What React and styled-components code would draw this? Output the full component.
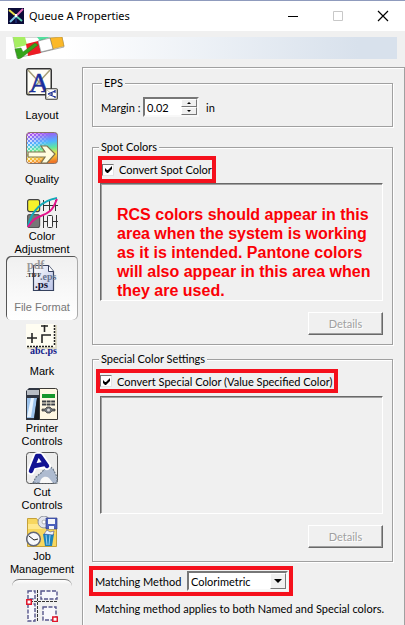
import { useState } from 'react';
import styled, { createGlobalStyle } from 'styled-components';

const tools = [
  { label: 'Layout', icon: LayoutIcon },
  { label: 'Quality', icon: QualityIcon },
  { label: 'Color\nAdjustment', icon: ColorIcon },
  { label: 'File Format', icon: FileIcon },
  { label: 'Mark', icon: MarkIcon },
  { label: 'Printer\nControls', icon: PrinterIcon },
  { label: 'Cut\nControls', icon: CutIcon },
  { label: 'Job\nManagement', icon: JobIcon },
];

function App() {
  const [active, setActive] = useState('File Format');
  const [margin, setMargin] = useState('0.02');

  const step = (amount) => {
    setMargin(Math.max(0, Number(margin) + amount).toFixed(2));
  }

  return (
    <>
      <GlobalStyle />
      <Window>
        <TitleBar>
          <AppIcon />
          <Title>Queue A Properties</Title>
          <WindowButton aria-label="Minimize">
            <svg width="12" height="12"><path d="M1 6.5h10" stroke="#000" /></svg>
          </WindowButton>
          <WindowButton aria-label="Maximize" disabled>
            <svg width="12" height="12"><path d="M1.5 1.5h9v9h-9z" fill="none" stroke="#c8c8c8" /></svg>
          </WindowButton>
          <WindowButton aria-label="Close">
            <svg width="12" height="12"><path d="M1 1l10 10M11 1L1 11" stroke="#000" strokeWidth="1.2" /></svg>
          </WindowButton>
        </TitleBar>
        <Banner><BannerArt /></Banner>
        <Body>
          <Sidebar>
            {tools.map(({ label, icon: Icon }) => (
              <Tool key={label} $active={label === active} onClick={() => setActive(label)}>
                <Icon />
                <ToolLabel>{label}</ToolLabel>
              </Tool>
            ))}
            <ScrollEdge />
            <Tool $short aria-label="Tiling"><TilingIcon /></Tool>
          </Sidebar>
          <Panel>
            <Group $bottom={8}>
              <Legend $indent={3}>EPS</Legend>
              <MarginRow>
                <label htmlFor="margin">Margin :</label>
                <Spinner>
                  <SpinnerInput id="margin" value={margin} onChange={(e) => setMargin(e.target.value)} />
                  <SpinnerButtons>
                    <SpinnerButton aria-label="Increase" onClick={() => step(0.01)}>
                      <svg width="4" height="3"><path d="M2 0l2 2H0z" /></svg>
                    </SpinnerButton>
                    <SpinnerButton aria-label="Decrease" onClick={() => step(-0.01)}>
                      <svg width="4" height="3"><path d="M0 0h4L2 2z" /></svg>
                    </SpinnerButton>
                  </SpinnerButtons>
                </Spinner>
                <span>in</span>
              </MarginRow>
            </Group>

            <Group $top={13} $bottom={9}>
              <Legend>Spot Colors</Legend>
              <CheckRow $top={2} $height={27} $outdent={2}>
                <Check />
                <CheckText>Convert Spot Color</CheckText>
              </CheckRow>
              <ColorList>
                <Note>
                  RCS colors should appear in this area when the system is working
                  as it is intended. Pantone colors will also appear in this area when
                  they are used.
                </Note>
              </ColorList>
              <DetailsButton disabled>Details</DetailsButton>
            </Group>

            <Group $top={7} $bottom={13}>
              <Legend>Special Color Settings</Legend>
              <CheckRow $top={3} $height={24} $outdent={4} $right={2} $bottom={3}>
                <Check />
                <CheckText>Convert Special Color (Value Specified Color)</CheckText>
              </CheckRow>
              <ColorList />
              <DetailsButton disabled>Details</DetailsButton>
            </Group>

            <MethodRow>
              <label htmlFor="method">Matching Method</label>
              <SelectBox>
                <Select id="method" defaultValue="Colorimetric">
                  <option>Colorimetric</option>
                  <option>Perceptual</option>
                  <option>Saturation</option>
                </Select>
                <SelectArrow>
                  <svg width="8" height="4"><path d="M0 0h8L4 4z" /></svg>
                </SelectArrow>
              </SelectBox>
            </MethodRow>
            <Hint>Matching method applies to both Named and Special colors.</Hint>
          </Panel>
        </Body>
      </Window>
    </>
  )
}

function Check() {
  return (
    <CheckBox>
      <CheckInput type="checkbox" defaultChecked />
      <svg width="7" height="7"><path d="M0 2v3l2 2h1l4-4V0L3 4 2 4z" /></svg>
    </CheckBox>
  )
}

function AppIcon() {
  return (
    <svg width="16" height="16" viewBox="0 0 16 16">
      <path d="M0 0h16v16H0z" fill="#0b0b38" />
      <path d="M1 2l6 5" stroke="#e8e04a" strokeWidth="2" />
      <path d="M15 1L8 8" stroke="#e070b8" strokeWidth="2" />
      <path d="M8 8l-6 6" stroke="#7fc8e8" strokeWidth="2" />
      <path d="M8 8l6 5" stroke="#5fd0b0" strokeWidth="2" />
      <path d="M7 6h2v3H7z" fill="#fff" />
      <path d="M8 10v5" stroke="#27459a" />
    </svg>
  )
}

function BannerArt() {
  return (
    <svg width="64" height="22" viewBox="0 0 64 22">
      <path d="M7 0l4 21 47-11-2-10z" fill="#fff" stroke="#777" strokeWidth=".6" />
      <path d="M7 0h12l2 8-12 3z" fill="#a6ee62" />
      <path d="M31 0h13l-10 4z" fill="#52df9d" />
      <path d="M20 7l12-3 3 12-13 3z" fill="#ed1c24" />
      <path d="M44 1l12-1 2 9-12 3z" fill="#fbb829" stroke="#b78a20" strokeWidth=".5" />
      <path d="M32 4l12-3 3 11-12 3z" fill="#fff" stroke="#555" strokeWidth=".5" />
      <path d="M9 12l6-1 2 4 12-9 3 2-17 13-3 1z" fill="#35a51b" stroke="#268112" strokeWidth=".5" />
    </svg>
  )
}

function LayoutIcon() {
  return (
    <svg width="32" height="32" viewBox="0 0 32 32">
      <rect x=".75" y=".75" width="24.5" height="26" rx="1.5" fill="#fffef6" stroke="#333" strokeWidth="1.5" />
      <path d="M2 2l22 24M24 2L2 26" stroke="#a8a078" strokeWidth="1.5" />
      <text x="3" y="24" fontFamily="Liberation Serif, serif" fontSize="28" fill="#1c2f9c" stroke="#1c2f9c" strokeWidth=".5">A</text>
      <rect x="19.75" y="20.75" width="11.5" height="10.5" rx="1" fill="#fff" stroke="#333" strokeWidth="1.2" />
      <path d="M20 31l11-10M20 21l11 10" stroke="#bdb693" strokeWidth=".8" />
      <path d="M22 26l7-3M22 26l7 3M26 24v4M29 22v3M29 28v2" fill="none" stroke="#1c2f9c" strokeWidth="1.2" />
    </svg>
  )
}

function QualityIcon() {
  return (
    <svg width="32" height="32" viewBox="0 0 32 32">
      <defs>
        <linearGradient id="rainbow" x1=".3" y1="0" x2=".45" y2="1">
          <stop offset="0" stopColor="#b545f0" />
          <stop offset=".35" stopColor="#4fb4ff" />
          <stop offset=".55" stopColor="#60e8a0" />
          <stop offset=".75" stopColor="#f8e040" />
          <stop offset="1" stopColor="#f07828" />
        </linearGradient>
        <linearGradient id="fade">
          <stop offset="0" stopColor="#fff" stopOpacity=".8" />
          <stop offset=".75" stopColor="#fff" stopOpacity="0" />
        </linearGradient>
        <pattern id="dots" width="4" height="4" patternUnits="userSpaceOnUse">
          <path d="M0 0h2v2H0zM2 2h2v2H2z" fill="#fff" />
        </pattern>
        <mask id="dotMask"><path d="M0 0h32v32H0z" fill="url(#dots)" /></mask>
      </defs>
      <rect x=".5" y=".5" width="31" height="31" rx="3" fill="url(#rainbow)" stroke="#8a7468" />
      <rect x="1" y="1" width="30" height="30" rx="2" fill="url(#fade)" mask="url(#dotMask)" />
      <path d="M2 20h17l-4-6h6l8 8-8 9h-6l4-6H2z" fill="#fffde0" stroke="#7e7350" strokeWidth="1.2" />
    </svg>
  )
}

function ColorIcon() {
  return (
    <svg width="32" height="32" viewBox="0 0 32 32">
      <rect x="1.6" y="3.6" width="12" height="12" rx="2" fill="#f6f22c" stroke="#444" strokeWidth="1.2" />
      <rect x="1.6" y="18.6" width="12" height="13" rx="2" fill="#777" stroke="#555" strokeWidth="1.2" />
      <path d="M17.5 4v11M17 9.5h15M23.5 4v11M29.5 4v11M17.5 19v13M17 25.5h4M27 25.5h5M30.5 19v13" stroke="#333" fill="none" />
      <rect x="21.5" y="19.5" width="5" height="12" rx="1" fill="#f8f8f8" stroke="#333" />
      <path d="M2 30C6 14 15 5 31 2" fill="none" stroke="#12a9b8" strokeWidth="2" />
      <path d="M2 31C10 18 16 22 24 15C28 12 29 7 31 3" fill="none" stroke="#e4148c" strokeWidth="2" />
    </svg>
  )
}

function FileIcon() {
  return (
    <svg width="32" height="32" viewBox="0 0 32 32">
      <defs>
        <linearGradient id="sheet" x1="0" y1="0" x2="1" y2="1">
          <stop offset="0" stopColor="#fff" />
          <stop offset="1" stopColor="#b9c2e6" />
        </linearGradient>
      </defs>
      <path d="M7.5 5.5h15l5 6v19h-20z" fill="url(#sheet)" stroke="#35415e" strokeWidth="1.2" />
      <path d="M22.5 5.5v6h5" fill="#fff" stroke="#35415e" />
      <g fontFamily="Liberation Serif, serif" fontWeight="bold">
        <text x="1" y="9" fontSize="12" fill="#999">pdf</text>
        <text x="0" y="17" fontSize="6" fill="#222">.TIFF</text>
        <text x="14" y="20" fontSize="10" fill="#64718e">.eps</text>
        <text x="9" y="28" fontSize="11" fill="#101030">.ps</text>
      </g>
    </svg>
  )
}

function MarkIcon() {
  return (
    <svg width="32" height="32" viewBox="0 0 32 32">
      <path d="M1 1h30v24H1z" fill="#e0dcc8" />
      <path d="M0 0h29v23H0z" fill="#fffdf2" />
      <path d="M1 14h10M6 9v10M15 2h7M18.5 1v7M16 19v-8h9" stroke="#252525" strokeWidth="1.6" fill="none" />
      <path d="M1 22.5h26M28.5 1v21" stroke="#222" strokeWidth="1.5" strokeDasharray="2 1" />
      <text x="4" y="30" fontFamily="Liberation Serif, serif" fontWeight="bold" fontSize="10" fill="#14208a">abc.ps</text>
    </svg>
  )
}

function PrinterIcon() {
  return (
    <svg width="32" height="32" viewBox="0 0 32 32">
      <path d="M0 3l3-3h11v32H0z" fill="#303642" />
      <path d="M1 2h12v5H1z" fill="#b8bdc4" />
      <path d="M1 10h10l-3 20H1z" fill="#9cc3ec" />
      <path d="M5 10h3L5 29H1z" fill="#e8f4ff" />
      <path d="M11 10h3v22H8z" fill="#14191f" />
      <path d="M13.5.5h16q2 0 2 2v29h-18z" fill="#fff8e3" stroke="#3a3834" />
      <path d="M16 6h13v4H16z" fill="#16972b" />
      <path d="M16 13.5h13M16 16.500h13" stroke="#3d4148" strokeWidth="2" strokeDasharray="4 .6" />
      <path d="M16 21h3l2-2h3l2 2h3v2h-3l-2 2h-3l-2-2h-3z" fill="#6d7277" stroke="#333" strokeWidth=".7" />
      <circle cx="22.5" cy="22" r="1.5" fill="#ddd" />
    </svg>
  )
}

function CutIcon() {
  return (
    <svg width="32" height="32" viewBox="0 0 32 32">
      <rect x=".5" y=".5" width="31" height="31" rx="3" fill="#ececec" stroke="#555" />
      <path d="M7 31l3-6 5-4 7-8 5 4 4 8v6z" fill="#aebbd0" stroke="#6b7888" strokeWidth="1.2" strokeDasharray="2 1" />
      <path d="M14 31c0-5 5-8 9-5l4 5z" fill="#f8f8f8" />
      <path d="M5 19L11 4h3l7 10M8 13h9" fill="none" stroke="#fff" strokeWidth="8" strokeLinejoin="round" strokeLinecap="round" />
      <path d="M5 19L11 4h3l7 10M8 14l10-2" fill="none" stroke="#121394" strokeWidth="4.5" strokeLinejoin="round" strokeLinecap="round" />
    </svg>
  )
}

function JobIcon() {
  return (
    <svg width="32" height="32" viewBox="0 0 32 32">
      <path d="M1.5 2.5h9l3 4h17v24h-29z" fill="#f7d75e" stroke="#c5a13a" />
      <path d="M2 8h28v5H2z" fill="#ffe98c" />
      <circle cx="18" cy="6" r="6" fill="#e3e5ee" stroke="#8b8f99" />
      <circle cx="18" cy="6" r="2" fill="#fff" stroke="#999" strokeWidth=".7" />
      <path d="M20 2h11v11H20z" fill="#4b5fbd" stroke="#33408a" strokeWidth=".7" />
      <path d="M22 3h7v5h-7zM23 10h5v3h-5z" fill="#f4f5fa" />
      <path d="M17 18h11l-2 12h-7z" fill="#1d83bd" />
      <path d="M18 18l3-4 3 2 4-1-1 4z" fill="#eef8ff" stroke="#338" strokeWidth=".5" />
      <path d="M20 19l1 10M24 19l-1 10" stroke="#9fd5f3" />
      <circle cx="7.5" cy="23" r="6.8" fill="#f7f8fb" stroke="#626779" strokeWidth="1.5" />
      <path d="M3 20l5 4 4-1" fill="none" stroke="#252525" />
    </svg>
  )
}

function TilingIcon() {
  return (
    <svg width="32" height="32" viewBox="0 0 32 32">
      <g fill="#f8f8fc" stroke="#56568c" strokeWidth="1.4" strokeDasharray="4 1.5">
        <path d="M2 1h7v8H2zM15 1h16v8H15zM2 14h7v17H2zM17 17h13v13H17z" />
      </g>
      <path d="M11.5 0v32M0 11.5h32" stroke="#333" strokeDasharray="3 1" />
      <path d="M.8 9.8h4.5v4.5H.8zM26.8 27h4.500v4.500h-4.500z" fill="#fff" stroke="#e0152a" strokeWidth="1.5" />
    </svg>
  )
}

const GlobalStyle = createGlobalStyle`
  * {
    box-sizing: border-box;
  }
  body {
    margin: 0;
    background: #f0f0f0;
    font-family: Lato, "Liberation Sans", Arial, sans-serif;
    font-size: 11px;
    line-height: 13px;
    color: #000;
  }
  button, input, select {
    font: inherit;
    color: inherit;
    margin: 0;
    padding: 0;
    border: 0;
    border-radius: 0;
    background: none;
  }
  svg {
    display: block;
    flex: none;
  }
`;

const Window = styled.main`
  display: flex;
  flex-direction: column;
  min-height: 100vh;
`;

const TitleBar = styled.header`
  display: flex;
  align-items: center;
  height: 31px;
  padding-left: 8px;
  border-top: 1px solid #8f9bbd;
  background: #fff;
`;

const Title = styled.h1`
  flex: 1;
  margin: 0 0 0 5px;
  font: 400 11px/16px "Noto Sans", "Open Sans", sans-serif;
  white-space: nowrap;
`;

const WindowButton = styled.button`
  display: flex;
  align-items: center;
  justify-content: center;
  width: 45px;
  height: 30px;
`;

const Banner = styled.div`
  height: 22px;
  margin: 6px 8px 5px 6px;
  overflow: hidden;
  background: linear-gradient(90deg, #fff 15%, #d8e1ec 90%);
`;

const Body = styled.div`
  display: flex;
  flex: 1;
`;

const Sidebar = styled.nav`
  display: flex;
  flex-direction: column;
  align-items: center;
  flex: none;
  width: 82px;
  padding-left: 2px;
`;

const Tool = styled.button`
  display: flex;
  flex-direction: column;
  align-items: center;
  width: 72px;
  height: ${(props) => (props.$short ? '36px' : '64px')};
  padding-top: 4px;
  border-radius: 5px;
  ${(props) => props.$active && `
    background: linear-gradient(#f0f0f0, #fff);
    box-shadow: inset 1px 1px 0 #555, inset -1px 0 0 #aaa;
    color: #777;
  `}
`;

const ToolLabel = styled.span`
  display: flex;
  align-items: center;
  justify-content: center;
  flex: none;
  height: 30px;
  font: 11px/13px "Liberation Sans", Arial, sans-serif;
  white-space: pre-line;
`;

const ScrollEdge = styled.div`
  width: 60px;
  height: 7px;
  margin-top: 3px;
  border-top: 1px solid #777;
  border-radius: 8px 8px 0 0;
  background: linear-gradient(#fff, #f0f0f0 4px);
`;

const Panel = styled.section`
  flex: 1;
  min-width: 0;
  margin-top: 3px;
  padding: 8px 11px 8px 9px;
  border: 1px solid #a0a0a0;
  border-bottom: 0;
  box-shadow: inset 1px 1px 0 #fff;
`;

const Group = styled.fieldset`
  min-width: 0;
  margin: ${(props) => props.$top || 0}px 0 0;
  padding: 0 9px ${(props) => props.$bottom}px 7px;
  border: 1px solid #a0a0a0;
  box-shadow: 1px 1px 0 #fff, inset 1px 1px 0 #fff;
`;

const Legend = styled.legend`
  height: 14px;
  margin-left: ${(props) => (props.$indent || 0) - 1}px;
  padding: 0 2px;
  background: #f0f0f0;
`;

const MarginRow = styled.div`
  display: flex;
  align-items: center;
  gap: 7px;
  height: 20px;
  margin: 7px 0 1px 1px;

  label {
    width: 35px;
    white-space: nowrap;
  }
`;

const Spinner = styled.div`
  display: flex;
  width: 56px;
  height: 20px;
  background: #fff;
  border: 2px solid;
  border-color: #777 #f8f8f8 #f8f8f8 #777;
`;

const SpinnerInput = styled.input`
  flex: 1;
  min-width: 0;
  padding-left: 2px;
`;

const SpinnerButtons = styled.div`
  display: flex;
  flex-direction: column;
  width: 16px;
`;

const SpinnerButton = styled.button`
  display: flex;
  flex: 1;
  align-items: center;
  justify-content: center;
  background: #f0f0f0;
  border: 1px solid;
  border-color: #fff #777 #777 #fff;
`;

const CheckRow = styled.label`
  display: flex;
  align-items: center;
  gap: 5px;
  width: fit-content;
  height: ${(props) => props.$height}px;
  margin: ${(props) => props.$top}px 0 ${(props) => props.$bottom || 0}px -${(props) => props.$outdent}px;
  padding-right: ${(props) => props.$right || 0}px;
  border: 4px solid #f5101c;
`;

const CheckBox = styled.span`
  display: grid;
  place-items: center;

  > * {
    grid-area: 1 / 1;
  }
  svg {
    pointer-events: none;
  }
  input:not(:checked) + svg {
    visibility: hidden;
  }
`;

const CheckInput = styled.input`
  appearance: none;
  width: 12px;
  height: 12px;
  background: #fff;
  border: 1px solid;
  border-color: #777 #e4e4e4 #e4e4e4 #777;
`;

const CheckText = styled.span`
  white-space: nowrap;
`;

const ColorList = styled.div`
  height: 118px;
  padding: 21px 8px 0 16px;
  border: 1px solid;
  border-color: #696969 #fff #fff #696969;
  box-shadow: inset 1px 1px 0 #a0a0a0;
`;

const Note = styled.p`
  margin: 0;
  font: bold 16px/19px "Liberation Sans", Arial, sans-serif;
  color: #fb0006;
`;

const DetailsButton = styled.button`
  display: block;
  width: 75px;
  height: 23px;
  margin: 11px 0 0 auto;
  background: #f0f0f0;
  border: 1px solid;
  border-color: #fff #696969 #696969 #fff;
  box-shadow: inset -1px -1px 0 #a0a0a0;
  color: #a0a0a0;
  text-shadow: 1px 1px 0 #fff;
`;

const MethodRow = styled.div`
  display: flex;
  align-items: center;
  justify-content: space-between;
  width: 204px;
  height: 30px;
  margin: 4px 0 0 -3px;
  padding: 0 1px 0 2px;
  border: 4px solid #f5101c;
`;

const SelectBox = styled.div`
  display: grid;
  align-items: center;
  width: 101px;
  height: 20px;
  background: #fff;
  border: 2px solid;
  border-color: #777 #f8f8f8 #f8f8f8 #777;

  > * {
    grid-area: 1 / 1;
  }
`;

const Select = styled.select`
  appearance: none;
  width: 100%;
  height: 16px;
  padding-left: 2px;
`;

const SelectArrow = styled.span`
  display: flex;
  align-items: center;
  justify-content: center;
  justify-self: end;
  width: 16px;
  height: 16px;
  background: #f0f0f0;
  border: 1px solid;
  border-color: #fff #777 #777 #fff;
  pointer-events: none;
`;

const Hint = styled.p`
  margin: 6px 0 0 3px;
  white-space: nowrap;
`;

export default App;
